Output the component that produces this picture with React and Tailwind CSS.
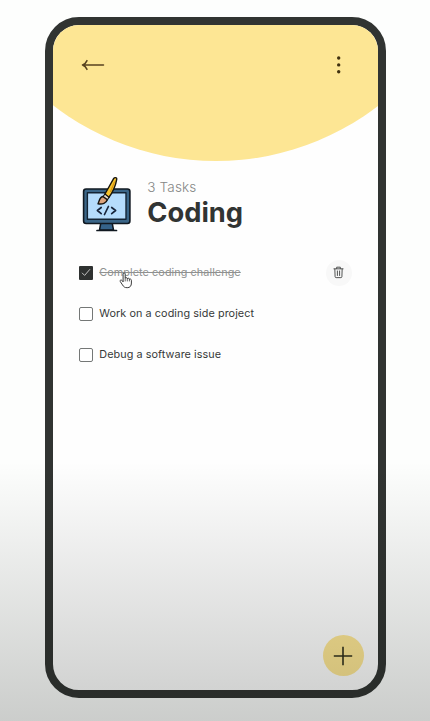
import React from "react";

const tasks = [
  { title: "Complete coding challenge", done: true },
  { title: "Work on a coding side project", done: false },
  { title: "Debug a software issue", done: false },
];

function BackArrow() {
  return (
    <svg width="24" height="14" viewBox="0 0 24 14" fill="none" stroke="#57421f" strokeWidth="1.5" strokeLinecap="round" strokeLinejoin="round">
      <path d="M22.5 7H1.5M6 2.600C5 5 3.500 6.300 1.500 7C3.500 7.700 5 9 6 11.400" />
    </svg>
  );
}

function MoreDots() {
  return (
    <svg width="6" height="20" viewBox="0 0 6 20" fill="#40310f">
      <circle cx="2.700" cy="3" r="1.700" />
      <circle cx="2.700" cy="9.900" r="1.700" />
      <circle cx="2.700" cy="16.700" r="1.700" />
    </svg>
  );
}

function CodingIcon() {
  return (
    <svg width="52" height="57" viewBox="0 0 52 57" fill="none" strokeLinejoin="round" strokeLinecap="round">
      <path d="M20 46H31L32.500 54H18.500Z" fill="#35638a" stroke="#101820" strokeWidth="1.500" />
      <path d="M16 54.500H35.500" stroke="#101820" strokeWidth="1.700" />
      <rect x="2.600" y="13" width="46.300" height="34.500" rx="2.500" fill="#3a6587" stroke="#101820" strokeWidth="1.600" />
      <rect x="6.400" y="16.700" width="38.600" height="26.500" fill="#b5dcfc" stroke="#142434" strokeWidth="1.400" />
      <path d="M20.200 31.500L16.400 34.500L20.200 37.700M30.700 31.500L34.600 34.500L30.700 37.700M27.400 30.500L23.500 38.500" stroke="#17243a" strokeWidth="1.700" />
      <path d="M23.700 18.500L32.600 2.600C33.300 1.400 36 1 35.700 3.300C34.800 8.800 31.800 16 27.800 21.500Z" fill="#f8c52e" stroke="#171510" strokeWidth="1.400" />
      <path d="M29.500 15.500L33.500 6" stroke="#d99612" strokeWidth="1.200" />
      <path d="M22 20.500L24 18L28 21.300L26.300 24Z" fill="#e9e0cf" stroke="#171510" strokeWidth="1.200" />
      <path d="M21.800 20.500C18.600 21 18.500 24.500 17 27.800C21.200 28.600 25.600 27.200 26.300 23.700Z" fill="#dda47d" stroke="#171510" strokeWidth="1.400" />
    </svg>
  );
}

function TrashIcon() {
  return (
    <svg width="11" height="13" viewBox="0 0 12 14" fill="none" stroke="#4b4d4c" strokeWidth="1.050" strokeLinecap="round" strokeLinejoin="round">
      <path d="M1 3H11M4 2.800V1.200H8V2.800M2 3.200L2.300 11.600Q2.400 12.600 3.400 12.600H8.600Q9.600 12.600 9.700 11.600L10 3.200M4.800 5.300V10.300M7.200 5.300V10.300" />
    </svg>
  );
}

function HandCursor() {
  return (
    <svg className="absolute left-[20px] top-[7px]" width="14" height="17" viewBox="0 0 14 17" fill="#fff" stroke="#3c3c3c" strokeWidth="1" strokeLinejoin="round" strokeLinecap="round">
      <path d="M4.100 9.500V2.200C4.100 .4 6.200 .4 6.200 2.200V6.100C6.800 5.200 8.300 5.500 8.300 6.600C9 5.900 10.400 6.200 10.400 7.200C11.300 6.700 12.400 7.200 12.400 8.300V11C12.400 14 11 15.700 8.200 15.700C5.500 15.700 4.600 14.700 3.500 12.900L1.300 9.600C.5 8.300 2 7.400 2.900 8.300Z" />
      <path d="M6.200 6.200V9M8.300 6.700V9M10.400 7.300V9" fill="none" strokeWidth=".8" />
    </svg>
  );
}

function Checkbox({ checked }) {
  return (
    <span className={checked ? "flex size-[14px] shrink-0 items-center justify-center rounded-[1px] bg-[#2e3130]" : "flex size-[14px] shrink-0 rounded-[2px] border border-[#747776] bg-white"}>
      {checked && (
        <svg width="10" height="9" viewBox="0 0 10 9" fill="none" stroke="#c2c2c2" strokeWidth="1">
          <path d="M1 4.800L3.600 7.400L9 1.200" />
        </svg>
      )}
    </span>
  );
}

function TaskRow({ task }) {
  return (
    <li className="flex h-[41px] items-center">
      <Checkbox checked={task.done} />
      <span className={task.done ? "relative ml-[6px] mt-px text-[10.800px] leading-4 tracking-[0.080px] text-[#8f9190] line-through" : "ml-[6px] mt-px text-[10.800px] leading-4 tracking-[0.080px] text-[#363938]"}>
        {task.title}
        {task.done && <HandCursor />}
      </span>
      {task.done && (
        <button className="ml-auto flex size-[26px] items-center justify-center rounded-full bg-[#f8f8f8]">
          <TrashIcon />
        </button>
      )}
    </li>
  );
}

export default function App() {
  return (
    <div className="relative h-[721px] w-[430px] overflow-hidden bg-[#fdfefd] pl-[45.300px] pt-[17px] font-['Inter',sans-serif]">
      <main className="relative flex h-[680.500px] w-[340.300px] flex-col overflow-hidden rounded-[34px] border-8 border-[#313432] bg-[#fefefe]">
        <div className="absolute -left-[103px] -top-[396px] size-[532px] rounded-full bg-[#fde694]" />
        <header className="relative flex h-20 shrink-0 items-center justify-between pl-[28px] pr-[36px]">
          <button><BackArrow /></button>
          <button><MoreDots /></button>
        </header>
        <section className="mt-[71px] flex items-start pl-[28px]">
          <CodingIcon />
          <div className="ml-[14px] pt-[2px]">
            <p className="text-[13.500px] font-light leading-[18px] tracking-[0.150px] text-[#858786]">3 Tasks</p>
            <h1 className="text-[27.300px] font-bold leading-[34px] text-[#313433]">Coding</h1>
          </div>
        </section>
        <ul className="mt-[19px] pl-[26px] pr-[26px]">
          {tasks.map((task) => <TaskRow key={task.title} task={task} />)}
        </ul>
        <button className="mb-[13.500px] ml-auto mr-[14px] mt-auto flex size-[41px] shrink-0 items-center justify-center rounded-full bg-[#fde694]">
          <svg width="20" height="20" viewBox="0 0 20 20" fill="none" stroke="#30301c" strokeWidth="1.600">
            <path d="M10 .8V19.200M.8 10H19.200" />
          </svg>
        </button>
      </main>
      <div className="pointer-events-none absolute inset-x-0 bottom-0 h-[260px] bg-linear-to-b from-transparent to-[#050a05]/20" />
    </div>
  );
}
